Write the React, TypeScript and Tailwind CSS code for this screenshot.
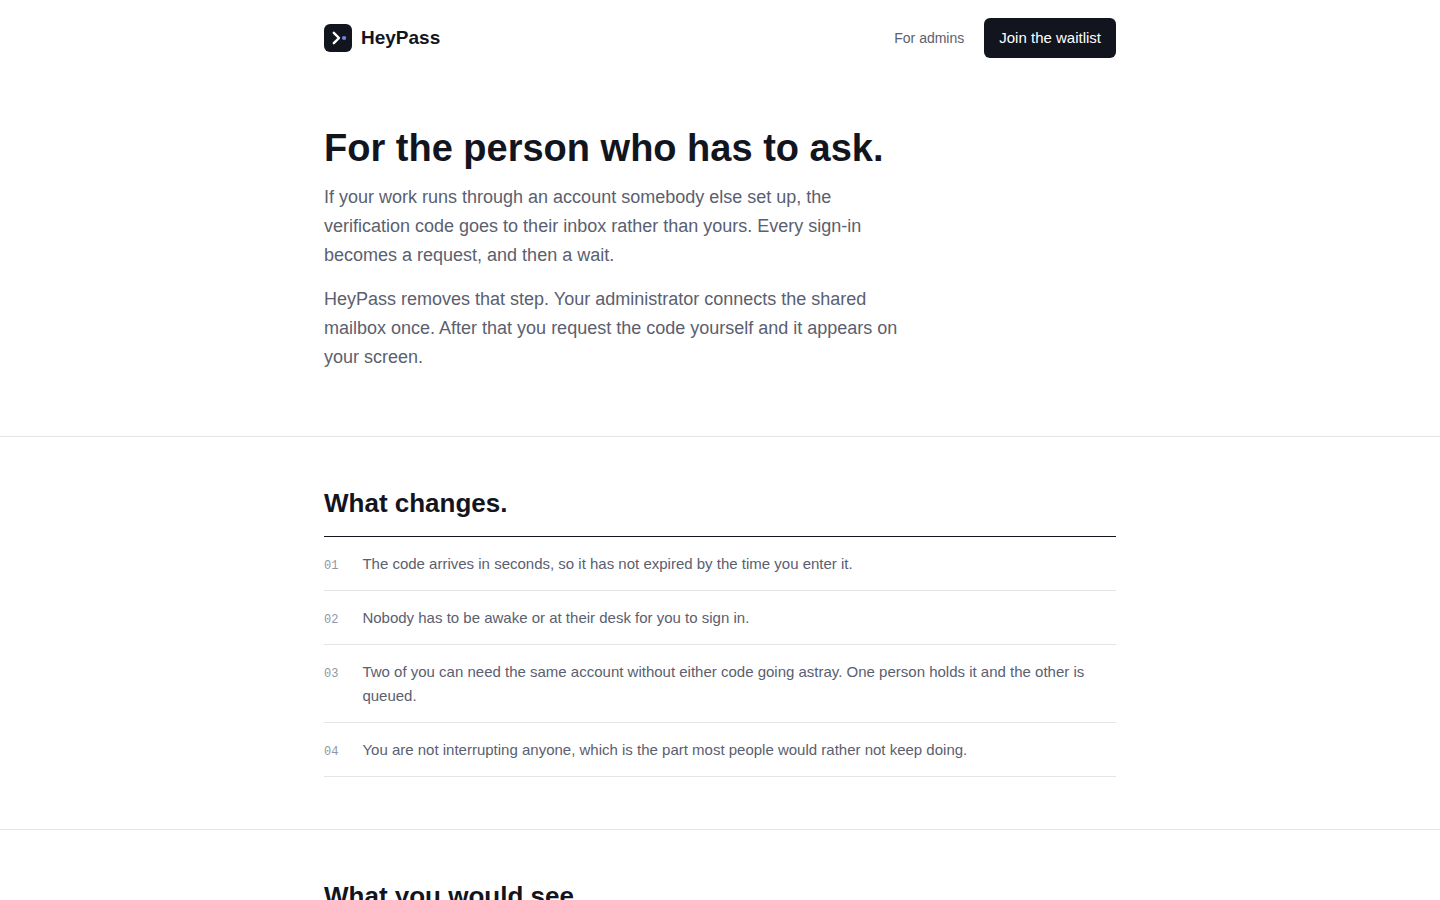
const changes: string[] = [
  "The code arrives in seconds, so it has not expired by the time you enter it.",
  "Nobody has to be awake or at their desk for you to sign in.",
  "Two of you can need the same account without either code going astray. One person holds it and the other is queued.",
  "You are not interrupting anyone, which is the part most people would rather not keep doing.",
];

function Logo() {
  return (
    <svg viewBox="0 0 28 28" className="size-7" aria-hidden="true">
      <rect width="28" height="28" rx="6" fill="#13151e" />
      <path
        d="M9.8 8.8 15 14l-5.2 5.2"
        fill="none"
        stroke="#ffffff"
        strokeWidth="2.4"
        strokeLinecap="round"
        strokeLinejoin="round"
      />
      <circle cx="20.1" cy="14" r="2.1" fill="#6c83ea" />
    </svg>
  );
}

function Header() {
  return (
    <header className="mx-auto flex w-full max-w-[840px] items-center justify-between px-6 py-[18px]">
      <a href="#top" className="flex items-center gap-[9px] text-[19px] font-bold">
        <Logo />
        HeyPass
      </a>
      <nav className="flex items-center gap-5">
        <a href="#admins" className="text-[14px] text-[#5a6070]">
          For admins
        </a>
        <a
          href="#waitlist"
          className="flex h-10 items-center rounded-md bg-[#13151e] px-[15px] text-[15px] text-white"
        >
          Join the waitlist
        </a>
      </nav>
    </header>
  );
}

export default function App() {
  return (
    <div
      id="top"
      className="min-h-screen bg-white font-['Liberation_Sans',Arial,sans-serif] text-[#13151e]"
    >
      <Header />
      <main>
        <section className="border-b border-[#e4e5e9] pt-[49px] pb-16">
          <div className="mx-auto max-w-[840px] px-6">
            <h1 className="text-[38px] leading-[46px] font-bold">For the person who has to ask.</h1>
            <div className="mt-3 flex max-w-[576px] flex-col gap-[15px] text-[18px] leading-[29px] text-[#5a6070]">
              <p>
                If your work runs through an account somebody else set up, the verification code
                goes to their inbox rather than yours. Every sign-in becomes a request, and then a
                wait.
              </p>
              <p>
                HeyPass removes that step. Your administrator connects the shared mailbox once.
                After that you request the code yourself and it appears on your screen.
              </p>
            </div>
          </div>
        </section>

        <section className="border-b border-[#e4e5e9] pt-[49px] pb-[52px]">
          <div className="mx-auto max-w-[840px] px-6">
            <h2 className="text-[26px] leading-[34px] font-bold">What changes.</h2>
            <ol className="mt-4 border-t border-[#13151e]">
              {changes.map((text, i) => (
                <li
                  key={text}
                  className="flex items-baseline gap-6 border-b border-[#e4e5e9] pt-[15px] pb-[14px] text-[15px] leading-6 text-[#5a6070]"
                >
                  <span className="font-['Liberation_Mono',monospace] text-xs text-[#9096a3]">
                    {`0${i + 1}`}
                  </span>
                  <span>{text}</span>
                </li>
              ))}
            </ol>
          </div>
        </section>

        <section className="pt-[49px] pb-[52px]">
          <div className="mx-auto max-w-[840px] px-6">
            <h2 className="text-[26px] leading-[34px] font-bold">What you would see.</h2>
          </div>
        </section>
      </main>
    </div>
  );
}
